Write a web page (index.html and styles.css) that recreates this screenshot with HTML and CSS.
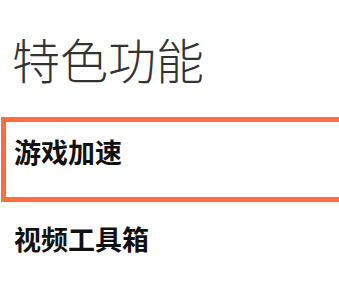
FILE: index.html
```html
<!DOCTYPE html>
<html lang="zh">
<head>
<meta charset="utf-8">
<link rel="stylesheet" href="styles.css">
</head>
<body>
<div class="page">
  <h1 class="title">特色功能</h1>
  <div class="item item-focused">游戏加速</div>
  <div class="item">视频工具箱</div>
</div>
</body>
</html>
```
FILE: styles.css
```css
html, body {
  margin: 0;
  padding: 0;
  background: #ffffff;
}
.page {
  width: 339px;
  height: 296px;
  overflow: hidden;
  font-family: "Noto Sans CJK SC", "Noto Sans", sans-serif;
}
.title {
  margin: 0;
  padding: 32px 0 0 12px;
  font-size: 48px;
  line-height: 52px;
  font-weight: 300;
  color: #333333;
}
.item {
  font-size: 27px;
  font-weight: 700;
  color: #111111;
  line-height: 32px;
  padding: 21px 0 27px 14px;
}
.item-focused {
  margin: 33px 0 0 1px;
  width: 360px;
  border: 5px solid #fb6d42;
  padding: 14px 0 29px 8px;
  box-shadow: 0 2px 2px rgba(0,0,0,0.03);
}
```
